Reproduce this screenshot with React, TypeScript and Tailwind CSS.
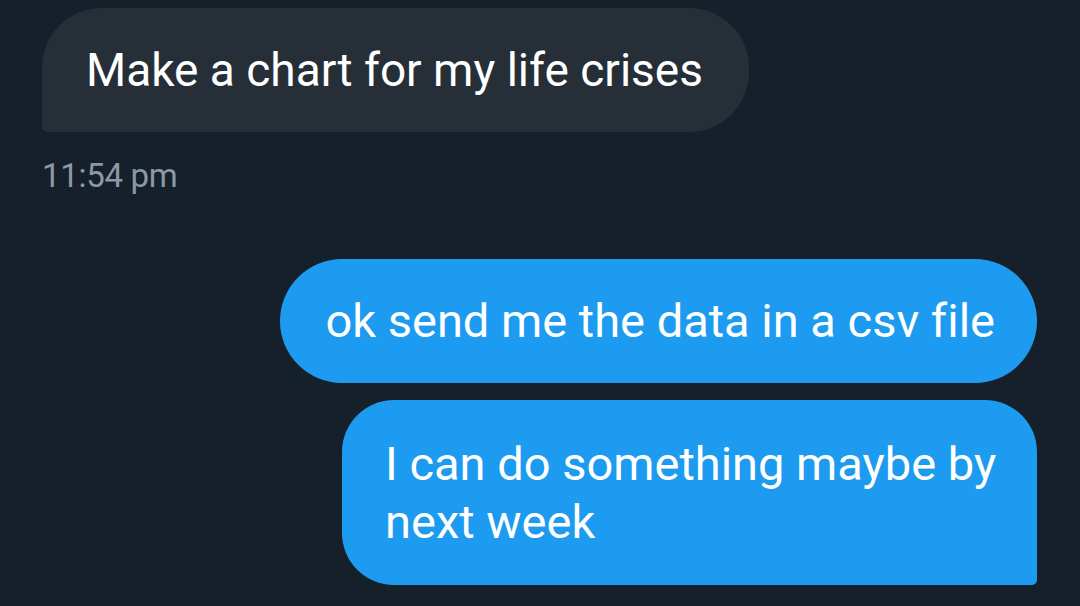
export default function App() {
  return (
    <div
      className="w-[1080px] h-[606px] overflow-hidden bg-[#15202b] flex flex-col pt-[8px] px-[42px] [font-variant-ligatures:none]"
      style={{ fontFamily: 'Roboto, "Noto Sans", sans-serif' }}
    >
      {/* received message */}
      <div className="flex">
        <div className="h-[124px] flex items-center bg-[#262f38] text-white text-[46px] pl-[44px] pr-[46px] rounded-t-[60px] rounded-br-[60px] rounded-bl-[5px]">
          Make a chart for my life crises
        </div>
      </div>
      <div className="mt-[24px] text-[33px] leading-[40px] text-[#8b98a5] tracking-[-0.3px]">11:54 pm</div>

      {/* sent messages */}
      <div className="mt-[63px] flex flex-col items-end gap-[17px] pr-[1px]">
        <div className="h-[124px] flex items-center bg-[#1d9bf0] text-white text-[47px] pl-[45px] pr-[42px] rounded-[62px]">
          ok send me the data in a csv file
        </div>
        <div className="w-[695px] h-[185px] flex items-center bg-[#1d9bf0] text-white text-[47px] leading-[58px] pl-[43px] pr-[24px] rounded-tl-[52px] rounded-tr-[52px] rounded-bl-[52px] rounded-br-[5px]">
          I can do something maybe by next week
        </div>
      </div>
    </div>
  )
}
